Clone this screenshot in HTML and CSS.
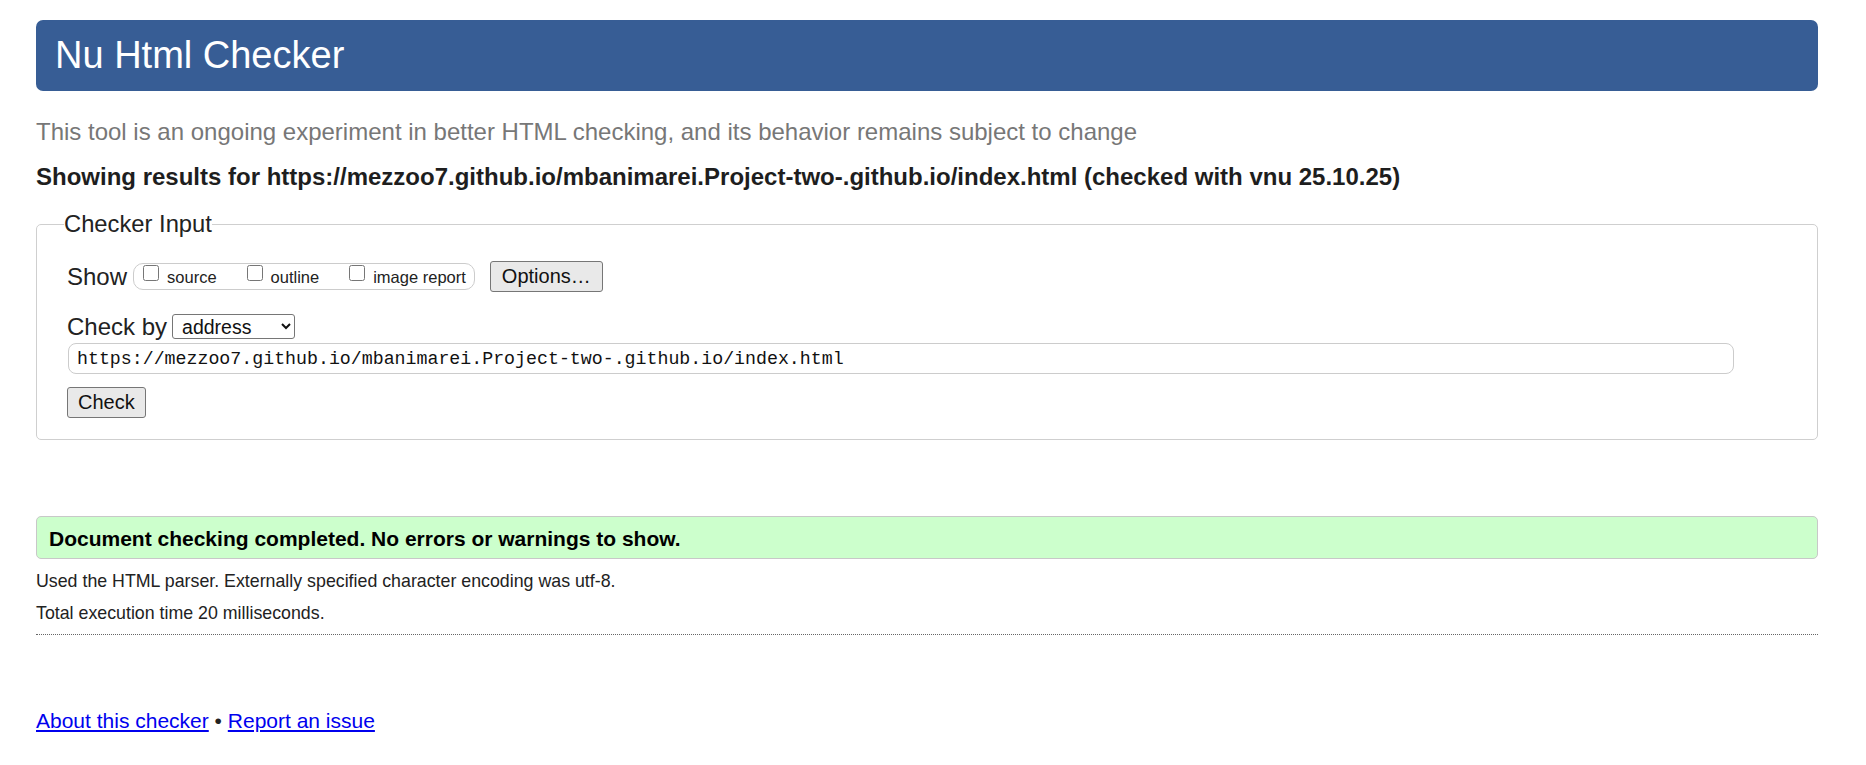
FILE: index.html
```html
<!DOCTYPE html>
<html lang="en">
<head>
<meta charset="utf-8">
<title>Nu Html Checker</title>
<link rel="stylesheet" href="styles.css">
</head>
<body>
<h1 class="masthead">Nu Html Checker</h1>
<p class="tagline">This tool is an ongoing experiment in better HTML checking, and its behavior remains subject to change</p>
<p class="results-for">Showing results for https://mezzoo7.github.io/mbanimarei.Project-two-.github.io/index.html (checked with vnu 25.10.25)</p>
<fieldset class="checker-input">
  <legend class="legend">Checker Input</legend>
  <div class="row row-show">
    <span class="row-label">Show</span>
    <span class="pill">
      <label class="opt"><input type="checkbox" class="cb">source</label>
      <label class="opt"><input type="checkbox" class="cb">outline</label>
      <label class="opt"><input type="checkbox" class="cb">image report</label>
    </span>
    <button class="btn btn-options" type="button">Options…</button>
  </div>
  <div class="row row-checkby">
    <span class="row-label label-checkby">Check by</span>
    <select class="select"><option>address</option></select>
  </div>
  <div class="row row-url">
    <input class="url" type="text" value="https://mezzoo7.github.io/mbanimarei.Project-two-.github.io/index.html">
  </div>
  <div class="row row-submit">
    <button class="btn btn-check" type="button">Check</button>
  </div>
</fieldset>
<p class="success">Document checking completed. No errors or warnings to show.</p>
<p class="info info-first">Used the HTML parser. Externally specified character encoding was utf-8.</p>
<p class="info">Total execution time 20 milliseconds.</p>
<hr class="divider">
<p class="footer"><a href="#" class="link">About this checker</a> • <a href="#" class="link">Report an issue</a></p>
</body>
</html>
```
FILE: styles.css
```css
html, body {
  background: #ffffff;
}
body {
  margin: 0;
  padding: 20px 48px 0 36px;
  font-family: "Liberation Sans", Arial, sans-serif;
  color: #222222;
}
.masthead {
  margin: 0;
  height: 71px;
  line-height: 71px;
  padding-left: 19px;
  background: #375d95;
  color: #ffffff;
  border-radius: 7px;
  font-weight: normal;
  font-size: 38px;
}
.tagline {
  margin: 27px 0 0;
  font-size: 24px;
  line-height: 28px;
  color: #777777;
}
.results-for {
  margin: 17px 0 0;
  font-size: 24px;
  line-height: 28px;
  font-weight: bold;
  color: #1e1e1e;
}
.checker-input {
  margin: 19px 0 0;
  padding: 23px 30px 21px;
  border: 1px solid #cfcfcf;
  border-radius: 5px;
  min-width: 0;
}
.legend {
  padding: 0;
  margin-left: -3px;
  font-size: 23.75px;
  line-height: 28px;
  color: #222222;
}
.row {
  display: flex;
  align-items: center;
}
.row-show {
  height: 31px;
}
.row-label {
  font-size: 24px;
  line-height: 28px;
  margin-right: 6px;
}
.label-checkby {
  margin-right: 5px;
}
.pill {
  display: inline-flex;
  align-items: center;
  box-sizing: border-box;
  height: 27px;
  border: 1px solid #cccccc;
  border-radius: 10px;
  padding: 0 8px 0 9px;
  gap: 30px;
}
.opt {
  display: flex;
  align-items: center;
  font-size: 16.5px;
  line-height: 20px;
  color: #222222;
}
.cb {
  width: 16px;
  height: 16px;
  margin: 0 8px 8px 0;
}
.btn {
  box-sizing: border-box;
  height: 31px;
  padding: 0 11px;
  font-family: "Liberation Sans", Arial, sans-serif;
  font-size: 20px;
  color: #111111;
  background: #e9e9e9;
  border: 1px solid #767676;
  border-radius: 3px;
}
.btn-options {
  margin-left: 15px;
}
.btn-check {
  padding: 0 10px;
}
.row-checkby {
  margin-top: 22px;
  height: 25px;
}
.select {
  box-sizing: border-box;
  width: 123px;
  height: 25px;
  padding: 0 0 0 5px;
  font-family: "Liberation Sans", Arial, sans-serif;
  font-size: 19.5px;
  color: #111111;
  background: #ffffff;
  border: 1px solid #767676;
  border-radius: 3px;
}
.row-url {
  margin-top: 4px;
}
.url {
  box-sizing: border-box;
  width: 1666px;
  height: 31px;
  margin: 0 0 0 1px;
  padding: 0 8px;
  font-family: "Liberation Mono", "DejaVu Sans Mono", monospace;
  font-size: 18.25px;
  color: #111111;
  border: 1px solid #cccccc;
  border-radius: 8px;
  outline: none;
}
.row-submit {
  margin-top: 13px;
}
.success {
  box-sizing: border-box;
  margin: 76px 0 0;
  height: 43px;
  padding: 1px 12px 0;
  line-height: 41px;
  font-size: 21px;
  font-weight: bold;
  color: #000000;
  background: #ccffcc;
  border: 1px solid #c8c8c8;
  border-radius: 5px;
}
.info {
  margin: 10px 0 0;
  font-size: 17.8px;
  line-height: 22px;
  color: #222222;
}
.info-first {
  margin-top: 11px;
}
.divider {
  margin: 10px 0 0;
  height: 0;
  border: 0;
  border-top: 1px dotted #666666;
}
.footer {
  margin: 74px 0 0;
  font-size: 21px;
  line-height: 24px;
  color: #222222;
}
.link {
  color: #0000ee;
}
```
